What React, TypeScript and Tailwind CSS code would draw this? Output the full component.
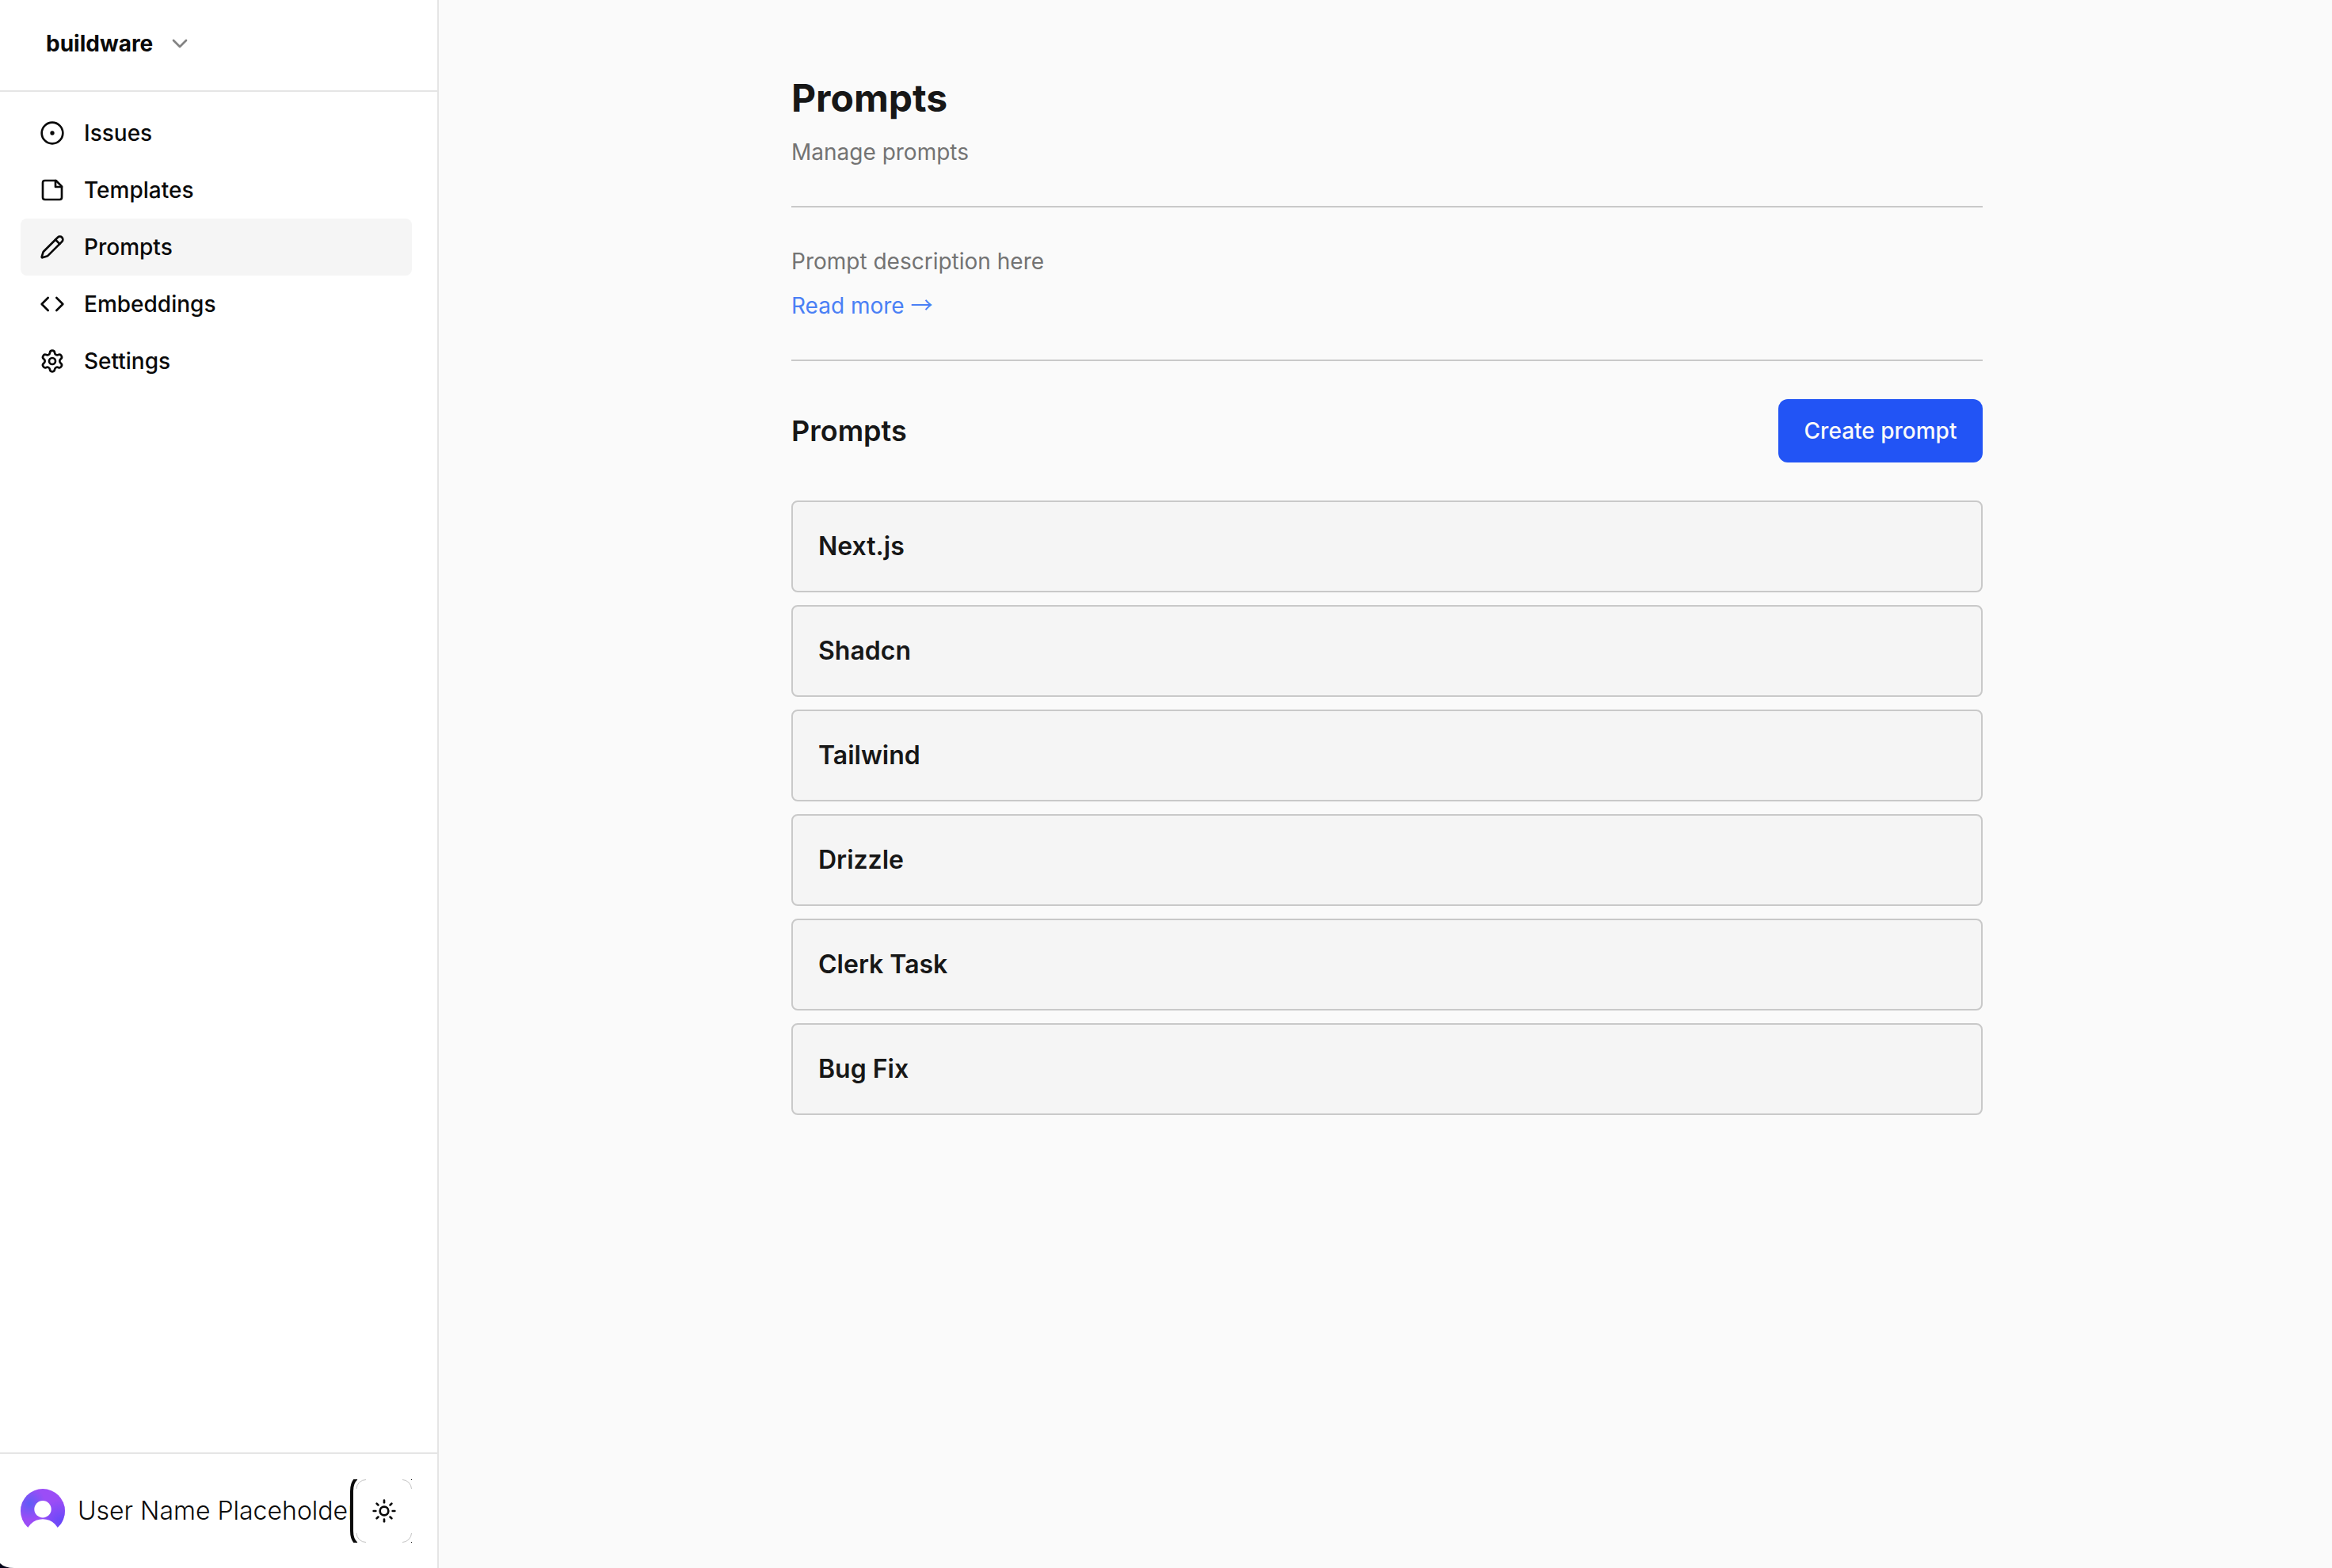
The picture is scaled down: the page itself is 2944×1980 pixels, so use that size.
import { ChevronDown, CircleDot, Code, Pencil, Settings, Sun } from "lucide-react";
import type { ReactNode } from "react";

function NoteIcon() {
  return (
    <svg className="size-8" viewBox="0 0 24 24" fill="none" stroke="currentColor" strokeWidth="2" strokeLinecap="round" strokeLinejoin="round" aria-hidden="true">
      <path d="M15.500 3H5a2 2 0 0 0-2 2v14a2 2 0 0 0 2 2h14a2 2 0 0 0 2-2V8.500L15.500 3Z" />
      <path d="M15 3v6h6" />
    </svg>
  );
}

const navItems: { label: string; icon: ReactNode; active?: boolean }[] = [
  { label: "Issues", icon: <CircleDot className="size-8" /> },
  { label: "Templates", icon: <NoteIcon /> },
  { label: "Prompts", icon: <Pencil className="size-8" />, active: true },
  { label: "Embeddings", icon: <Code className="size-8" /> },
  { label: "Settings", icon: <Settings className="size-8" /> },
];

const prompts = ["Next.js", "Shadcn", "Tailwind", "Drizzle", "Clerk Task", "Bug Fix"];

function Avatar() {
  return (
    <svg className="size-14 shrink-0" viewBox="0 0 56 56" role="img" aria-label="User avatar">
      <defs>
        <radialGradient id="avatar-left" cx="0.2" cy="0.33" r="0.36">
          <stop offset="0" stopColor="#5f5cf6" />
          <stop offset="1" stopColor="#5f5cf6" stopOpacity="0" />
        </radialGradient>
        <radialGradient id="avatar-right" cx="0.92" cy="0.75" r="0.5">
          <stop offset="0" stopColor="#6549f8" />
          <stop offset="1" stopColor="#6549f8" stopOpacity="0" />
        </radialGradient>
        <clipPath id="avatar-clip">
          <circle cx="28" cy="28" r="28" />
        </clipPath>
      </defs>
      <g clipPath="url(#avatar-clip)">
        <rect width="56" height="56" fill="#9b4df6" />
        <rect width="56" height="56" fill="url(#avatar-left)" />
        <rect width="56" height="56" fill="url(#avatar-right)" />
        <circle cx="28" cy="25.700" r="10.700" fill="#fff" />
      </g>
      <circle cx="28" cy="59.700" r="21.500" fill="#fff" />
    </svg>
  );
}

function ButtonFrame() {
  return (
    <svg className="absolute inset-0 size-full" viewBox="0 0 78 80" fill="none" aria-hidden="true">
      <path d="M8 -1Q2 4 2 15V65Q2 76 8 81" stroke="#0a0a0a" strokeWidth="4" />
      <path d="M8 12A12 12 0 0 1 20 .5M66 .5A12 12 0 0 1 77.500 12M8 68A12 12 0 0 0 20 79.500M66 79.500A12 12 0 0 0 77.500 68" stroke="#b4b4b4" strokeWidth=".8" />
      <path d="M77 0h1v1h-1zM77 79h1v1h-1z" fill="#0a0a0a" />
    </svg>
  );
}

function Sidebar() {
  return (
    <aside className="relative flex w-[554px] shrink-0 flex-col border-r-2 border-[#e5e5e5] bg-white text-[#0a0a0a]">
      <div className="border-b-2 border-[#e5e5e5] pt-4 pb-5 pl-[58px]">
        <button className="flex h-[78px] items-center gap-[18px] text-[28px] font-bold">
          buildware
          <ChevronDown className="size-8 opacity-50" />
        </button>
      </div>
      <nav className="flex flex-1 flex-col py-4 pr-8 pl-[26px]">
        {navItems.map((item) => (
          <a
            key={item.label}
            href="#"
            aria-current={item.active ? "page" : undefined}
            className={`flex h-18 items-center gap-6 rounded-lg px-6 text-[28px] font-medium ${item.active ? "bg-neutral-100" : ""}`}
          >
            {item.icon}
            {item.label}
          </a>
        ))}
      </nav>
      <div className="flex h-[146px] items-center gap-4 border-t-2 border-[#e5e5e5] pr-8 pl-[26px]">
        <Avatar />
        <div className="flex min-w-0 flex-1 items-center">
          <span className="min-w-0 flex-1 text-[32px] font-light whitespace-nowrap">User Name Placeholder</span>
          <button aria-label="Toggle theme" className="relative flex h-20 w-[78px] shrink-0 items-center justify-center bg-white pl-2">
            <ButtonFrame />
            <Sun className="size-8" />
          </button>
        </div>
      </div>
      <svg className="absolute bottom-0 left-0 h-2 w-5" viewBox="0 0 20 8" aria-hidden="true">
        <path d="M0 2Q6 8 18 8H0Z" fill="#05051a" />
      </svg>
    </aside>
  );
}

export default function App() {
  return (
    <div className="flex min-h-screen bg-neutral-50 font-['Inter',sans-serif]">
      <Sidebar />
      <main className="min-w-0 flex-1 pt-[92px] pl-1 text-[#171717]">
        <div className="mx-auto max-w-[1504px]">
          <h1 className="text-[48px] leading-[64px] font-bold">Prompts</h1>
          <p className="mt-4 text-[28px] leading-10 text-[#737373]">Manage prompts</p>
          <hr className="my-12 border-t-2 border-[#c9c9c9]" />
          <p className="text-[28px] leading-10 text-[#737373]">Prompt description here</p>
          <a href="#" className="mt-4 block text-[28px] leading-10 text-[#4a80f5]">
            Read more <span className="font-['Noto_Sans_CJK_JP',sans-serif] leading-none">→</span>
          </a>
          <hr className="my-12 border-t-2 border-[#c9c9c9]" />
          <div className="flex items-center justify-between">
            <h2 className="text-[36px] font-semibold">Prompts</h2>
            <button className="h-20 min-w-[258px] rounded-xl bg-[#2254f5] px-8 text-[28px] font-medium text-neutral-50">Create prompt</button>
          </div>
          <ul className="mt-12 flex flex-col gap-4">
            {prompts.map((name) => (
              <li key={name}>
                <a href="#" className="flex h-[116px] items-center rounded-lg border-2 border-[#c9c9c9] bg-neutral-100 px-8 text-[32px] font-semibold">{name}</a>
              </li>
            ))}
          </ul>
        </div>
      </main>
    </div>
  );
}
